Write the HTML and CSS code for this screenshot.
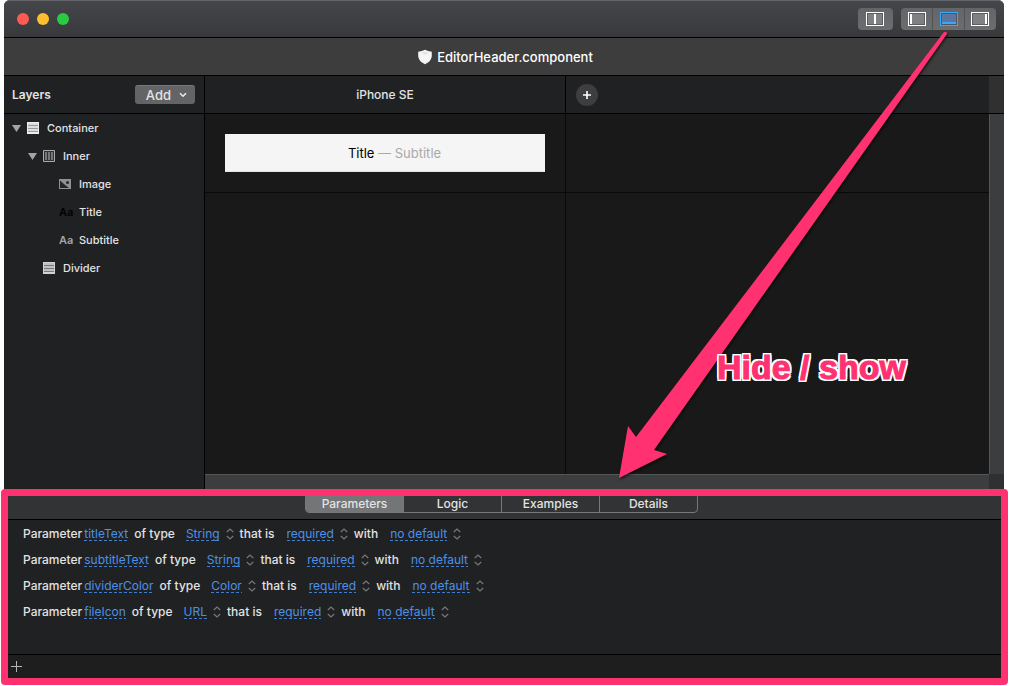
FILE: index.html
```html
<!DOCTYPE html>
<html lang="en">
<head>
<meta charset="utf-8">
<title>EditorHeader.component</title>
<link rel="stylesheet" href="styles.css">
</head>
<body>
<div class="window">
  <header class="titlebar">
    <div class="lights">
      <button class="light close" aria-label="Close"></button>
      <button class="light minimize" aria-label="Minimize"></button>
      <button class="light expand" aria-label="Zoom"></button>
    </div>
    <div class="toolbar">
      <div class="segments">
        <button class="segment" aria-label="Split view"><svg width="18" height="14" viewBox="0 0 18 14"><rect x=".5" y=".5" width="17" height="13" fill="#808183" stroke="#fff"/><rect x="1.500" y="1.500" width="15" height="11" fill="none" stroke="#5b5c5e"/><path d="M9 2v10" stroke="#fff" stroke-width="2"/></svg></button>
      </div>
      <div class="segments">
        <button class="segment" aria-label="Toggle left pane"><svg width="18" height="14" viewBox="0 0 18 14"><rect x=".5" y=".5" width="17" height="13" fill="#808183" stroke="#fff"/><rect x="1.500" y="1.500" width="15" height="11" fill="none" stroke="#5b5c5e"/><path d="M3 2v10" stroke="#fff" stroke-width="2"/></svg></button>
        <button class="segment" aria-label="Toggle bottom pane" aria-pressed="true"><svg width="18" height="14" viewBox="0 0 18 14"><rect x=".5" y=".5" width="17" height="13" fill="#5f759c" stroke="#36a9fb"/><rect x="1.500" y="1.500" width="15" height="11" fill="none" stroke="#4b5668"/><path d="M2 11h14" stroke="#36a9fb" stroke-width="2"/></svg></button>
        <button class="segment" aria-label="Toggle right pane"><svg width="18" height="14" viewBox="0 0 18 14"><rect x=".5" y=".5" width="17" height="13" fill="#808183" stroke="#fff"/><rect x="1.500" y="1.500" width="15" height="11" fill="none" stroke="#5b5c5e"/><path d="M15 2v10" stroke="#fff" stroke-width="2"/></svg></button>
      </div>
    </div>
  </header>

  <div class="document-bar">
    <svg width="16" height="16" viewBox="0 0 16 16"><path d="M8 .7Q11 2.300 14.800 2.800V7q0 5-6.800 8.200Q1.200 12 1.200 7V2.800Q5 2.300 8 .7Z" fill="#f5f5f5"/><path d="m4 4 4-1.300L12 4 8 5.500Z" fill="#e2e2e2"/></svg>
    <h1 class="document-name">EditorHeader.component</h1>
  </div>

  <main class="editor">
    <aside class="sidebar">
      <div class="sidebar-head">
        <h2 class="sidebar-title">Layers</h2>
        <button class="add-button">Add<svg width="8" height="6" viewBox="0 0 8 6"><path d="m1 1.200 3 3 3-3" fill="none" stroke="#eee" stroke-width="1.500"/></svg></button>
      </div>
      <ul class="layers">
        <li class="layer">
          <svg class="twisty" width="9" height="7" viewBox="0 0 9 7"><path d="M0 0h9L4.500 7Z" fill="#a3a4a5"/></svg>
          <svg class="layer-icon" width="12" height="12" viewBox="0 0 12 12"><path fill="#eee" d="M0 0h12v12H0z"/><path d="M1 3.500h10M1 6.500h10M1 9.500h10" stroke="#999"/><path d="M1 2h10M1 5h10M1 8h10" stroke="#ccc"/></svg>Container</li>
        <li class="layer depth-1">
          <svg class="twisty" width="9" height="7" viewBox="0 0 9 7"><path d="M0 0h9L4.500 7Z" fill="#a3a4a5"/></svg>
          <svg class="layer-icon" width="12" height="12" viewBox="0 0 12 12"><path fill="#303133" stroke="#aaa" d="M.5.5h11v11H.5z"/><path d="M3 2v8M6 2v8M9 2v8" stroke="#777" stroke-width="2"/></svg>Inner</li>
        <li class="layer depth-2">
          <svg class="layer-icon" width="12" height="10" viewBox="0 0 12 10"><path fill="#909193" d="M0 0h12v10H0z"/><path d="M1 1.500V9h9L5.500 5.500Z" fill="#252628"/><circle cx="8.500" cy="3.500" r="1.500" fill="#252628"/></svg>Image</li>
        <li class="layer depth-2"><span class="type-icon dark">Aa</span>Title</li>
        <li class="layer depth-2"><span class="type-icon">Aa</span>Subtitle</li>
        <li class="layer depth-1 leaf">
          <svg class="layer-icon" width="12" height="12" viewBox="0 0 12 12"><path fill="#d2d2d2" d="M0 0h12v12H0z"/><path d="M1 3.500h10M1 6.500h10M1 9.500h10" stroke="#777"/><path d="M1 2h10M1 5h10M1 8h10" stroke="#b0b0b0"/></svg>Divider</li>
      </ul>
    </aside>

    <section class="stage">
      <div class="stage-head">
        <div class="device">iPhone SE</div>
        <div class="device-add"><button class="round-button" aria-label="Add device"><svg width="8" height="8" viewBox="0 0 8 8"><path d="M4 0v8M0 4h8" stroke="#fff" stroke-width="1.600"/></svg></button></div>
        <div class="scroll-head"></div>
      </div>
      <div class="stage-body">
        <div class="canvas">
          <div class="cell"><div class="preview">Title <span class="preview-subtitle">— Subtitle</span></div></div>
          <div class="cell last"></div>
          <div class="cell bottom"></div>
          <div class="cell last bottom"></div>
        </div>
        <div class="scroll-y"></div>
        <div class="scroll-x"></div>
        <div class="scroll-corner"></div>
      </div>
    </section>
  </main>

  <section class="panel">
    <nav class="tabs-bar">
      <div class="tabs" role="tablist">
        <button class="tab active" role="tab" aria-selected="true">Parameters</button>
        <button class="tab" role="tab">Logic</button>
        <button class="tab" role="tab">Examples</button>
        <button class="tab" role="tab">Details</button>
      </div>
    </nav>
    <div class="parameters">
      <div class="parameter">
        <span class="word">Parameter</span><a class="token" href="#titleText">titleText</a><span class="word of-type">of type</span>
        <label class="choice"><select class="token" aria-label="Type"><option>String</option></select><svg width="8" height="12" viewBox="0 0 8 12"><path d="m.8 4 3.200-3 3.200 3m0 4L4 11 .8 8" fill="none" stroke="#77787a" stroke-width="1.200"/></svg></label>
        <span class="word">that is</span>
        <label class="choice"><select class="token" aria-label="Requirement"><option>required</option></select><svg width="8" height="12" viewBox="0 0 8 12"><path d="m.8 4 3.200-3 3.200 3m0 4L4 11 .8 8" fill="none" stroke="#77787a" stroke-width="1.200"/></svg></label>
        <span class="word">with</span>
        <label class="choice"><select class="token" aria-label="Default"><option>no default</option></select><svg width="8" height="12" viewBox="0 0 8 12"><path d="m.8 4 3.200-3 3.200 3m0 4L4 11 .8 8" fill="none" stroke="#77787a" stroke-width="1.200"/></svg></label>
      </div>
      <div class="parameter">
        <span class="word">Parameter</span><a class="token" href="#subtitleText">subtitleText</a><span class="word of-type">of type</span>
        <label class="choice"><select class="token" aria-label="Type"><option>String</option></select><svg width="8" height="12" viewBox="0 0 8 12"><path d="m.8 4 3.200-3 3.200 3m0 4L4 11 .8 8" fill="none" stroke="#77787a" stroke-width="1.200"/></svg></label>
        <span class="word">that is</span>
        <label class="choice"><select class="token" aria-label="Requirement"><option>required</option></select><svg width="8" height="12" viewBox="0 0 8 12"><path d="m.8 4 3.200-3 3.200 3m0 4L4 11 .8 8" fill="none" stroke="#77787a" stroke-width="1.200"/></svg></label>
        <span class="word">with</span>
        <label class="choice"><select class="token" aria-label="Default"><option>no default</option></select><svg width="8" height="12" viewBox="0 0 8 12"><path d="m.8 4 3.200-3 3.200 3m0 4L4 11 .8 8" fill="none" stroke="#77787a" stroke-width="1.200"/></svg></label>
      </div>
      <div class="parameter">
        <span class="word">Parameter</span><a class="token" href="#dividerColor">dividerColor</a><span class="word of-type">of type</span>
        <label class="choice"><select class="token" aria-label="Type"><option>Color</option></select><svg width="8" height="12" viewBox="0 0 8 12"><path d="m.8 4 3.200-3 3.200 3m0 4L4 11 .8 8" fill="none" stroke="#77787a" stroke-width="1.200"/></svg></label>
        <span class="word">that is</span>
        <label class="choice"><select class="token" aria-label="Requirement"><option>required</option></select><svg width="8" height="12" viewBox="0 0 8 12"><path d="m.8 4 3.200-3 3.200 3m0 4L4 11 .8 8" fill="none" stroke="#77787a" stroke-width="1.200"/></svg></label>
        <span class="word">with</span>
        <label class="choice"><select class="token" aria-label="Default"><option>no default</option></select><svg width="8" height="12" viewBox="0 0 8 12"><path d="m.8 4 3.200-3 3.200 3m0 4L4 11 .8 8" fill="none" stroke="#77787a" stroke-width="1.200"/></svg></label>
      </div>
      <div class="parameter">
        <span class="word">Parameter</span><a class="token" href="#fileIcon">fileIcon</a><span class="word of-type">of type</span>
        <label class="choice"><select class="token" aria-label="Type"><option>URL</option></select><svg width="8" height="12" viewBox="0 0 8 12"><path d="m.8 4 3.200-3 3.200 3m0 4L4 11 .8 8" fill="none" stroke="#77787a" stroke-width="1.200"/></svg></label>
        <span class="word">that is</span>
        <label class="choice"><select class="token" aria-label="Requirement"><option>required</option></select><svg width="8" height="12" viewBox="0 0 8 12"><path d="m.8 4 3.200-3 3.200 3m0 4L4 11 .8 8" fill="none" stroke="#77787a" stroke-width="1.200"/></svg></label>
        <span class="word">with</span>
        <label class="choice"><select class="token" aria-label="Default"><option>no default</option></select><svg width="8" height="12" viewBox="0 0 8 12"><path d="m.8 4 3.200-3 3.200 3m0 4L4 11 .8 8" fill="none" stroke="#77787a" stroke-width="1.200"/></svg></label>
      </div>
    </div>
    <footer class="panel-foot">
      <button class="plus-button" aria-label="Add parameter"><svg width="11" height="11" viewBox="0 0 11 11"><path d="M5.500 0v11M0 5.500h11" stroke="#b4b5b6"/></svg></button>
    </footer>
    <div class="highlight"></div>
  </section>
</div>

<svg class="arrow" width="340" height="456" viewBox="0 0 340 456"><path d="M329 2Q332 1 332 4L39 420l13 4L4 448l9-52 8 11Z" fill="#ff3171"/></svg>
<div class="callout">Hide / show</div>
</body>
</html>
```

FILE: styles.css
```css
* { box-sizing: border-box; }

body {
  margin: 0;
  min-height: 100vh;
  position: relative;
  overflow: hidden;
  background: #fff;
  color: #e3e3e4;
  font: 500 12px/16px Inter, "Liberation Sans", sans-serif;
}

button, select { font: inherit; color: inherit; border: 0; padding: 0; margin: 0; background: none; }
h1, h2, ul { margin: 0; padding: 0; font: inherit; }
svg { display: block; flex: none; }

.window {
  display: flex;
  flex-direction: column;
  height: calc(100vh - 7px);
  margin: 0 5px 0 4px;
  border-radius: 6px 6px 0 0;
  background: #202123;
}

.titlebar {
  display: flex;
  justify-content: space-between;
  align-items: center;
  height: 38px;
  padding: 0 8px 0 13px;
  border-top: 1px solid #66676a;
  border-bottom: 1px solid #000;
  border-radius: 6px 6px 0 0;
  background: linear-gradient(#45464a, #38393b);
}
.lights { display: flex; gap: 8px; }
.light { width: 12px; height: 12px; border-radius: 50%; }
.close { background: #ff5a52; }
.minimize { background: #ffbe2e; }
.expand { background: #2aca42; }
.toolbar { display: flex; gap: 8px; }
.segments {
  display: flex;
  border-radius: 4px;
  overflow: hidden;
  background: linear-gradient(#646568, #6c6d6f);
}
.segment { display: flex; align-items: center; justify-content: center; width: 32px; height: 22px; }
.segment:only-child { width: 35px; padding-right: 1px; }
.segment:not(:last-child) { border-right: 1px solid #515255; }
.segment:last-child:not(:only-child) { width: 31px; padding-right: 1px; }

.document-bar {
  display: flex;
  align-items: center;
  justify-content: center;
  gap: 4px;
  height: 38px;
  padding-left: 2px;
  border-bottom: 1px solid #000;
  background: #3d3d3d;
}
.document-name { font-size: 13px; color: #fff; }

.editor { display: flex; flex: 1; min-height: 0; }
.sidebar { width: 201px; border-right: 1px solid #000; background: #202123; }
.sidebar-head {
  display: flex;
  align-items: center;
  justify-content: space-between;
  height: 38px;
  padding: 0 9px 0 8px;
  border-bottom: 1px solid #000;
}
.sidebar-title { font-weight: 600; }
.add-button {
  display: flex;
  align-items: center;
  justify-content: flex-end;
  gap: 8px;
  width: 60px;
  height: 19px;
  padding-right: 8px;
  border-radius: 3px;
  background: #636465;
  border-top: 1px solid #77787a;
  font-size: 13px;
}
.layers { list-style: none; }
.layer {
  display: flex;
  align-items: center;
  height: 28px;
  padding-left: 8px;
  font-size: 11px;
}
.twisty { margin-right: 6px; }
.layer-icon { margin-right: 8px; }
.depth-1 { padding-left: 24px; }
.depth-1.leaf { padding-left: 39px; }
.depth-2 { padding-left: 55px; }
.type-icon { width: 20px; color: #a3a4a5; font-weight: 600; }
.type-icon.dark { color: #000; }

.stage { display: flex; flex-direction: column; flex: 1; min-width: 0; background: #191919; }
.stage-head { display: flex; height: 38px; border-bottom: 1px solid #000; background: #202123; }
.device {
  display: flex;
  align-items: center;
  justify-content: center;
  width: 361px;
  border-right: 1px solid #000;
}
.device-add { display: flex; align-items: center; flex: 1; padding-left: 10px; }
.round-button {
  display: flex;
  align-items: center;
  justify-content: center;
  width: 22px;
  height: 22px;
  border-radius: 50%;
  background: #3e3e3f;
}
.scroll-head { width: 15px; background: #303031; }
.stage-body { display: grid; grid-template: 1fr 15px / 1fr 15px; flex: 1; }
.canvas { display: grid; grid-template: 79px 1fr / 361px 1fr; }
.cell { padding: 20px; border: 0 solid #090909; border-width: 0 1px 1px 0; }
.cell.last { border-right: 0; }
.cell.bottom { border-bottom: 0; }
.preview {
  height: 38px;
  padding: 11px 0 0 19px;
  background: #f5f5f5;
  border-bottom: 1px solid #dce7e1;
  color: #000;
  text-align: center;
  font-size: 13px;
  font-weight: 400;
}
.preview-subtitle { color: #a9a9a9; }
.scroll-y { background: #3c3d3f; border-left: 1px solid #555657; }
.scroll-x { background: #3c3d3f; border-top: 1px solid #555657; }
.scroll-corner { background: #2f3032; }

.panel { position: relative; background: #202123; }
.tabs-bar {
  display: flex;
  justify-content: center;
  height: 31px;
  padding-top: 4px;
  border-bottom: 1px solid #000;
  background: #323335;
}
.tabs {
  display: flex;
  width: 393px;
  height: 20px;
  margin-right: 5px;
  border: 1px solid #77787a;
  border-radius: 4px;
  overflow: hidden;
}
.tab { flex: 1; padding-top: 2px; }
.tab + .tab { border-left: 1px solid #77787a; }
.tab.active { background: #747577; }

.parameters { height: 134px; padding: 1px 0 0 19px; }
.parameter { display: flex; align-items: center; height: 26px; }
.of-type { margin-left: 6px; }
.token {
  margin-left: 2px;
  color: #4b91e9;
  font-weight: 400;
  text-decoration: none;
  background: repeating-linear-gradient(90deg, #3f7fd2 0 3px, transparent 3px 5px) 0 calc(100% - 1px) / 100% 1px no-repeat;
}
.choice { display: flex; align-items: center; gap: 6px; margin: 0 6px 0 12px; }
.of-type + .choice { margin-left: 11px; }
select.token { margin: 0; appearance: none; field-sizing: content; height: 16px; line-height: 16px; }

.panel-foot {
  display: flex;
  align-items: center;
  height: 25px;
  padding: 0 0 2px 7px;
  border-top: 1px solid #000;
  background: #1e1e1e;
}
.highlight {
  position: absolute;
  inset: 0 -4px -6px -3px;
  border: 7px solid #ff3171;
  border-radius: 4px;
  pointer-events: none;
}

.arrow {
  position: absolute;
  left: 615px;
  top: 30px;
  filter: drop-shadow(1px 2px 1px #0008);
  pointer-events: none;
}
.callout {
  position: absolute;
  left: 717px;
  top: 347px;
  color: #ff3171;
  font: bold 34px/40px "Liberation Sans", sans-serif;
  white-space: nowrap;
  -webkit-text-stroke: 1px #ff3171;
  text-shadow: 2px 0 #fff, -2px 0 #fff, 0 2px #fff, 0 -2px #fff, 2px 2px #fff, -2px 2px #fff, 2px -2px #fff, -2px -2px #fff;
}
```
